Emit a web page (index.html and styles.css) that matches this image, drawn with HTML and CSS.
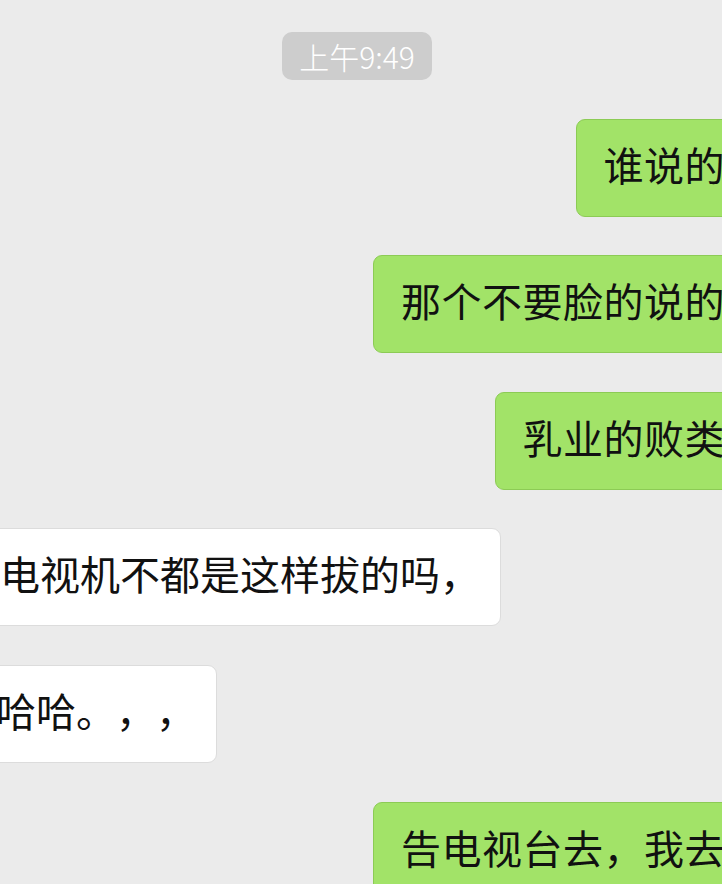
FILE: index.html
```html
<!DOCTYPE html>
<html lang="zh-CN">
<head>
    <meta charset="UTF-8">
    <meta name="viewport" content="width=device-width, initial-scale=1.0">
    <title>聊天</title>
    <link rel="stylesheet" href="styles.css">
</head>
<body>
    <div class="chat">
        <div class="time-row">
            <span class="time">上午9:49</span>
        </div>
        <div class="row sent">
            <div class="bubble green">谁说的</div>
        </div>
        <div class="row sent">
            <div class="bubble green">那个不要脸的说的</div>
        </div>
        <div class="row sent">
            <div class="bubble green">乳业的败类</div>
        </div>
        <div class="row received">
            <div class="bubble white">电视机不都是这样拔的吗，</div>
        </div>
        <div class="row received">
            <div class="bubble white shift">哈哈。，，</div>
        </div>
        <div class="row sent">
            <div class="bubble green">告电视台去，我去</div>
        </div>
    </div>
</body>
</html>
```

FILE: styles.css
```css
html, body {
    margin: 0;
    padding: 0;
}
body {
    background-color: #ebebeb;
    font-family: "Noto Sans CJK SC", "Noto Sans", sans-serif;
    color: #111;
    overflow: hidden;
    width: 722px;
    height: 884px;
}
.chat {
    display: flex;
    flex-direction: column;
    gap: 38.6px;
    padding-top: 32px;
    overflow: hidden;
}
.time-row {
    display: flex;
    justify-content: center;
    padding-right: 8px;
}
.time {
    display: flex;
    align-items: center;
    justify-content: center;
    width: 150px;
    height: 48px;
    border-radius: 10px;
    background-color: #cdcdcd;
    color: #fff;
    font-size: 30px;
    font-family: "Noto Sans CJK SC", "Liberation Sans", sans-serif;
    font-weight: 300;
}
.row {
    display: flex;
}
.sent {
    justify-content: flex-end;
}
.received {
    justify-content: flex-start;
}
.bubble {
    flex-shrink: 0;
    display: flex;
    align-items: center;
    box-sizing: border-box;
    height: 98px;
    padding: 0 27px 8px;
    border-radius: 9px;
    font-size: 40px;
    white-space: nowrap;
    text-spacing-trim: space-all;
}
.green {
    background-color: #a2e368;
    border: 1px solid #8ccb55;
    letter-spacing: 0.5px;
    margin-right: -31px;
}
.white {
    background-color: #fff;
    border: 1px solid #dcdcdc;
    padding-right: 20px;
    margin-left: -28px;
}
.white.shift {
    margin-left: -32px;
}
```
